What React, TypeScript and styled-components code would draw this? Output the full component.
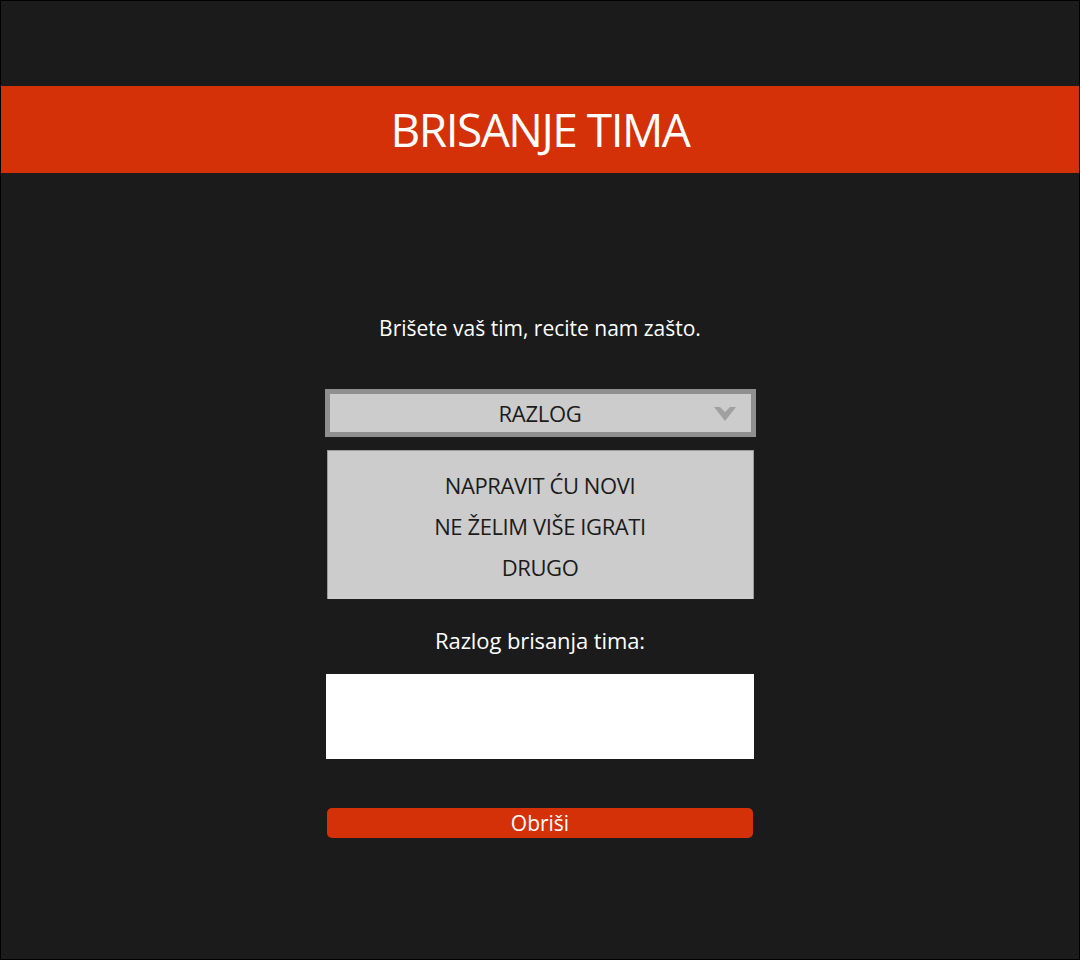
import React from "react";
import styled, { createGlobalStyle } from "styled-components";

const Global = createGlobalStyle`
  html, body { margin: 0; padding: 0; background: #1b1b1b; }
  * { box-sizing: border-box; }
`;

const Page = styled.div`
  width: 1080px;
  height: 960px;
  background: #1b1b1b;
  border: 1px solid #000;
  font-family: "Open Sans", "Liberation Sans", sans-serif;
  display: flex;
  flex-direction: column;
  align-items: center;
`;

const Header = styled.header`
  align-self: stretch;
  margin-top: 85px;
  height: 87px;
  background: #d43109;
  color: #fff;
  display: flex;
  align-items: center;
  justify-content: center;
  font-size: 46px;
  letter-spacing: -1.5px;
  padding-bottom: 2px;
`;

const Intro = styled.p`
  margin: 143px 0 0;
  color: #fff;
  font-size: 21px;
  line-height: 24px;
  letter-spacing: 0;
`;

const Select = styled.div`
  margin-top: 49px;
  width: 431px;
  height: 48px;
  border: 5px solid #8f8f8f;
  background: #cccccc;
  position: relative;
  display: flex;
  align-items: center;
  justify-content: center;
  color: #1b1b1b;
  font-size: 22px;
  letter-spacing: -0.3px;
`;

const Chevron = styled.svg`
  position: absolute;
  right: 15px;
  top: 13px;
`;

const Options = styled.ul`
  list-style: none;
  margin: 13px 0 0;
  padding: 22px 0 0;
  width: 427px;
  height: 149px;
  background: #cccccc;
  border: 1px solid #9a9a9a;
  border-bottom: none;
  display: flex;
  flex-direction: column;
  align-items: center;
  gap: 17px;
`;

const Option = styled.li`
  color: #1b1b1b;
  font-size: 22px;
  line-height: 24px;
  letter-spacing: -0.4px;
`;

const Label = styled.p`
  margin: 29px 0 0;
  color: #fff;
  font-size: 22px;
  line-height: 24px;
  letter-spacing: -0.1px;
`;

const TextArea = styled.div`
  margin-top: 22px;
  width: 428px;
  height: 85px;
  background: #fff;
`;

const Button = styled.button`
  margin-top: 49px;
  width: 426px;
  height: 30px;
  border: none;
  border-radius: 5px;
  background: #d43109;
  color: #fff;
  font-family: inherit;
  font-size: 21px;
  line-height: 24px;
  padding: 0;
  letter-spacing: 0px;
`;

export default function App() {
  return (
    <>
      <Global />
      <Page>
        <Header>BRISANJE TIMA</Header>
        <Intro>Brišete vaš tim, recite nam zašto.</Intro>
        <Select>
          RAZLOG
          <Chevron width="22" height="14" viewBox="0 0 22 14">
            <path d="M0 0 H6 L11 5 L16 0 H22 L11 14 Z" fill="#a0a0a0" />
          </Chevron>
        </Select>
        <Options>
          <Option>NAPRAVIT ĆU NOVI</Option>
          <Option>NE ŽELIM VIŠE IGRATI</Option>
          <Option>DRUGO</Option>
        </Options>
        <Label>Razlog brisanja tima:</Label>
        <TextArea />
        <Button>Obriši</Button>
      </Page>
    </>
  );
}
